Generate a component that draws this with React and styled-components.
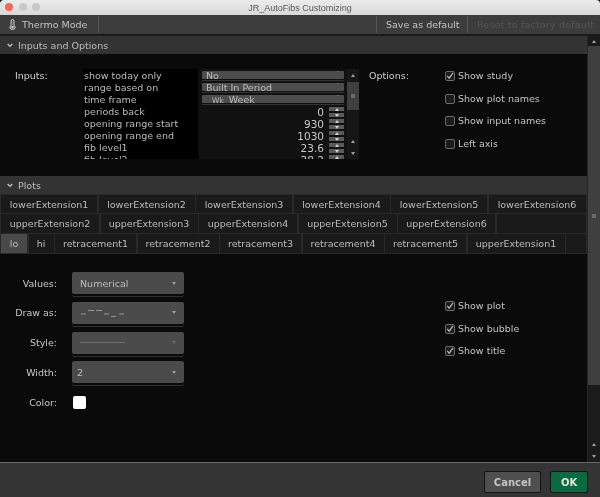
import styled, { createGlobalStyle } from "styled-components";

const GlobalStyle = createGlobalStyle`
  html, body {
    margin: 0;
    padding: 0;
    background: #0a0a0a;
  }
  * {
    box-sizing: border-box;
  }
`;

const Window = styled.div`
  width: 600px;
  height: 497px;
  display: flex;
  flex-direction: column;
  overflow: hidden;
  background: #0a0a0a;
  color: #c8c8c8;
  font-family: "DejaVu Sans", sans-serif;
  font-size: 9.5px;
  filter: blur(0.3px);
`;

// TITLE BAR
const TitleBar = styled.div`
  height: 15px;
  flex: none;
  position: relative;
  display: flex;
  align-items: center;
  justify-content: center;
  background: linear-gradient(#ececec, #d8d8d8);
  border-radius: 4px 4px 0 0;
  color: #5a5a5a;
  font-family: "Liberation Sans", sans-serif;
  font-size: 9px;
`;

const Lights = styled.div`
  position: absolute;
  left: 5px;
  top: 3px;
  display: flex;
  gap: 5.5px;
`;

const Light = styled.span`
  width: 8px;
  height: 8px;
  border-radius: 50%;
  background: ${(props) => props.$color};
`;

// TOOLBAR
const Toolbar = styled.div`
  height: 21px;
  flex: none;
  display: flex;
  align-items: stretch;
  background: #3c3c3c;
  border-bottom: 2px solid #1a1a1a;
`;

const ToolItem = styled.div`
  display: flex;
  align-items: center;
  gap: 6px;
  padding: 0 0 0 9px;
  margin: 1px 0;
  border-right: 1px solid #555;
  color: ${(props) => (props.$disabled ? "#555" : "#c4c4c4")};
  letter-spacing: ${(props) => (props.$disabled ? "0.2px" : "0")};
  width: ${(props) => props.$w}px;
  white-space: nowrap;
  &:last-child {
    border-right: none;
  }
`;

const ToolSpacer = styled.div`
  flex: 1;
  margin: 1px 0;
  border-right: 1px solid #555;
`;

// MAIN
const Main = styled.div`
  flex: 1;
  min-height: 0;
  display: flex;
`;

const Content = styled.div`
  flex: 1;
  min-width: 0;
  display: flex;
  flex-direction: column;
`;

const SectionHeader = styled.div`
  height: 18px;
  flex: none;
  display: flex;
  align-items: center;
  gap: 5px;
  padding-left: 7px;
  background: #333;
  color: #bdbdbd;
`;

const Scrollbar = styled.div`
  width: 13px;
  flex: none;
  display: flex;
  flex-direction: column;
  background: #1b1b1b;
  border-left: 1px solid #262626;
`;

const ScrollCap = styled.div`
  height: ${(props) => props.$h}px;
  flex: none;
  display: flex;
  align-items: center;
  justify-content: center;
`;

const ScrollThumb = styled.div`
  height: ${(props) => props.$h}px;
  flex: none;
  display: flex;
  align-items: center;
  justify-content: center;
  background: #3f3f3f;
`;

const Grip = styled.span`
  width: 4px;
  height: 4px;
  background: #6a6a6a;
`;

const ScrollTrack = styled.div`
  flex: 1;
`;

const Arrow = styled.span`
  width: 0;
  height: 0;
  border-left: 2.5px solid transparent;
  border-right: 2.5px solid transparent;
  ${(props) =>
    props.$down
      ? `border-top: 3px solid ${props.$color || "#a0a0a0"};`
      : `border-bottom: 3px solid ${props.$color || "#a0a0a0"};`}
`;

// INPUTS AND OPTIONS
const InputsSection = styled.div`
  height: 122px;
  flex: none;
  display: flex;
  padding: 15px 0 0 15px;
`;

const InputsLabel = styled.div`
  width: 68px;
  flex: none;
  padding-top: 1px;
  line-height: 12px;
  color: #d0d0d0;
`;

const NamesPanel = styled.div`
  width: 115px;
  height: 90px;
  flex: none;
  overflow: hidden;
  padding: 1px 0 0 1px;
  background: #000;
`;

const NameRow = styled.div`
  height: 12px;
  line-height: 12px;
  white-space: nowrap;
  color: #bcbcbc;
`;

const ValuesPanel = styled.div`
  width: 148px;
  height: 90px;
  flex: none;
  overflow: hidden;
  margin-left: 1px;
  padding-left: 3px;
  background: #111;
`;

const PillList = styled.div`
  margin-bottom: 1px;
`;

const ValueRow = styled.div`
  height: 12px;
  display: flex;
  align-items: center;
  justify-content: flex-end;
  gap: 5px;
  padding-right: 3px;
  color: #c8c8c8;
  font-size: 10.5px;
`;

const Pill = styled.div`
  width: 142px;
  height: 12px;
  padding-top: 2px;
  border-bottom: 1px solid #333;
`;

const PillBody = styled.div`
  height: 7.5px;
  display: flex;
  align-items: flex-start;
  justify-content: space-between;
  overflow: hidden;
  padding: 0 4px;
  border-radius: 1px;
  background: #4d4d4d;
  color: #bdbdbd;
  line-height: 9px;
`;

const PillCaret = styled.span`
  margin-top: 2px;
`;

const WeekTag = styled.span`
  font-size: 7.5px;
  margin: 0 5px 0 6px;
`;

const Spinner = styled.div`
  width: 15px;
  height: 10px;
  flex: none;
  display: flex;
  flex-direction: column;
  justify-content: space-between;
`;

const SpinBar = styled.span`
  height: 4px;
  display: flex;
  align-items: center;
  justify-content: center;
  background: #5a5a5a;
`;

const InnerScroll = styled.div`
  width: 12px;
  height: 90px;
  flex: none;
  display: flex;
  flex-direction: column;
  background: #161616;
`;

const OptionsLabel = styled.div`
  width: 76px;
  flex: none;
  margin-left: 10px;
  padding-top: 1px;
  line-height: 12px;
  color: #d0d0d0;
`;

const CheckList = styled.div`
  display: flex;
  flex-direction: column;
  margin-top: ${(props) => props.$top || 0}px;
`;

const CheckRow = styled.div`
  height: 22.6px;
  display: flex;
  align-items: flex-start;
  gap: 3px;
  line-height: 12px;
  color: #c4c4c4;
`;

const CheckBox = styled.span`
  width: 10px;
  height: 10px;
  flex: none;
  margin-top: 1px;
  display: flex;
  align-items: center;
  justify-content: center;
  border: 1px solid #6a6a6a;
  border-radius: 2px;
  background: #1c1c1c;
`;

// PLOTS
const TabRows = styled.div`
  display: flex;
  flex-direction: column;
  gap: 1px;
  padding: 1px 1px 0;
  height: 60px;
  flex: none;
  background: #292929;
`;

const TabRow = styled.div`
  height: ${(props) => props.$h}px;
  flex: none;
  display: flex;
  gap: 1.5px;
`;

const Tab = styled.div`
  width: ${(props) => props.$w}px;
  flex: ${(props) => (props.$w ? "none" : "1")};
  display: flex;
  align-items: center;
  justify-content: center;
  background: ${(props) => (props.$active ? "#494949" : "#1a1a1a")};
  color: #bcbcbc;
  white-space: nowrap;
`;

const PlotBody = styled.div`
  flex: 1;
  display: flex;
  padding-top: 18px;
`;

const PlotForm = styled.div`
  width: 445px;
  flex: none;
  display: flex;
  flex-direction: column;
  gap: 7.75px;
`;

const FormRow = styled.div`
  height: 22px;
  display: flex;
  align-items: center;
  gap: 15px;
`;

const FormLabel = styled.div`
  width: 57px;
  flex: none;
  text-align: right;
  color: #c8c8c8;
`;

const Select = styled.div`
  width: 112px;
  height: 22px;
  display: flex;
  align-items: center;
  justify-content: space-between;
  padding: 0 8px 0 ${(props) => (props.$tight ? 5 : 8)}px;
  border-radius: 2px;
  background: #4b4b4b;
  box-shadow: 0 2px 0 #0a0a0a, 0 3px 0 #303030;
  color: #bcbcbc;
`;

const Swatch = styled.div`
  width: 13px;
  height: 13px;
  margin-left: 1px;
  border-radius: 2px;
  background: #fff;
`;

// FOOTER
const Footer = styled.div`
  height: 35px;
  flex: none;
  display: flex;
  justify-content: flex-end;
  gap: 9px;
  padding: 8px 12px 0 0;
  background: #343434;
  border-top: 1px solid #6a6a6a;
`;

const Button = styled.button`
  width: ${(props) => props.$w}px;
  height: 22px;
  padding: 0;
  border: 1px solid #141414;
  border-radius: 2px;
  background: ${(props) => (props.$primary ? "#0a6b42" : "#4f4f4f")};
  color: ${(props) => (props.$primary ? "#e4e4e4" : "#c4c4c4")};
  font-family: "DejaVu Sans", sans-serif;
  font-size: 10px;
  font-weight: 700;
`;

const names = [
  "show today only",
  "range based on",
  "time frame",
  "periods back",
  "opening range start",
  "opening range end",
  "fib level1",
  "fib level2",
];

const numbers = ["0", "930", "1030", "23.6", "38.2"];

const tabRows = [
  {
    h: 18,
    tabs: [
      ["lowerExtension1", 96],
      ["lowerExtension2", 96],
      ["lowerExtension3", 96],
      ["lowerExtension4", 96],
      ["lowerExtension5", 96],
      ["lowerExtension6", 97],
    ],
  },
  {
    h: 19,
    tabs: [
      ["upperExtension2", 98],
      ["upperExtension3", 97],
      ["upperExtension4", 98],
      ["upperExtension5", 98],
      ["upperExtension6", 97],
      ["", 0],
    ],
  },
  {
    h: 19,
    tabs: [
      ["lo", 26],
      ["hi", 25],
      ["retracement1", 81],
      ["retracement2", 81],
      ["retracement3", 81],
      ["retracement4", 81],
      ["retracement5", 81],
      ["upperExtension1", 97],
      ["", 0],
    ],
  },
];

const Chevron = () => (
  <svg width="6" height="5" viewBox="0 0 6 5">
    <path d="M0.7 1 L3 3.4 L5.3 1" fill="none" stroke="#c8c8c8" strokeWidth="1.2" />
  </svg>
);

const Thermo = () => (
  <svg width="7" height="11" viewBox="0 0 7 11">
    <path
      d="M2 2a1.5 1.5 0 0 1 3 0V6.2a2.6 2.6 0 1 1-3 0Z"
      fill="#5c5c5c"
      stroke="#d4d4d4"
      strokeWidth="0.9"
    />
    <circle cx="3.5" cy="8.2" r="1.2" fill="#d4d4d4" />
  </svg>
);

const Tick = () => (
  <svg width="8" height="8" viewBox="0 0 8 8">
    <path d="M1.2 3.8 L3.2 6.2 L7 0.8" fill="none" stroke="#b8b8b8" strokeWidth="1.2" />
  </svg>
);

const DashLine = () => (
  <svg width="46" height="10" viewBox="0 0 46 10">
    <path
      d="M1 6h5M8 2.5h6M16 2.5h6M24 6h5M31 8.5h5M37 8.5h0M39 6h5"
      fill="none"
      stroke="#a8a8a8"
      strokeWidth="0.8"
    />
  </svg>
);

const ThinLine = () => (
  <svg width="46" height="3" viewBox="0 0 46 3">
    <path d="M0 1.5h45" stroke="#6e6e6e" strokeWidth="1" />
  </svg>
);

const Check = ({ label, checked }) => (
  <CheckRow>
    <CheckBox>{checked && <Tick />}</CheckBox>
    {label}
  </CheckRow>
);

export default function App() {
  return (
    <Window>
      <GlobalStyle />
      <TitleBar>
        <Lights>
          <Light $color="#ee6a5f" />
          <Light $color="#c8c8c8" />
          <Light $color="#c8c8c8" />
        </Lights>
        JR_AutoFibs Customizing
      </TitleBar>

      <Toolbar>
        <ToolItem $w={99}>
          <Thermo />
          Thermo Mode
        </ToolItem>
        <ToolSpacer />
        <ToolItem $w={91}>Save as default</ToolItem>
        <ToolItem $w={132} $disabled>
          Reset to factory default
        </ToolItem>
      </Toolbar>

      <Main>
        <Content>
          <SectionHeader>
            <Chevron />
            Inputs and Options
          </SectionHeader>
          <InputsSection>
            <InputsLabel>Inputs:</InputsLabel>
            <NamesPanel>
              {names.map((name) => (
                <NameRow key={name}>{name}</NameRow>
              ))}
            </NamesPanel>
            <ValuesPanel>
              <PillList>
                <Pill>
                  <PillBody>
                    No
                    <PillCaret>
                      <Arrow $down />
                    </PillCaret>
                  </PillBody>
                </Pill>
                <Pill>
                  <PillBody>
                    Built In Period
                    <PillCaret>
                      <Arrow $down />
                    </PillCaret>
                  </PillBody>
                </Pill>
                <Pill>
                  <PillBody>
                    <span>
                      <WeekTag>Wk</WeekTag>Week
                    </span>
                    <PillCaret>
                      <Arrow $down />
                    </PillCaret>
                  </PillBody>
                </Pill>
              </PillList>
              {numbers.map((value) => (
                <ValueRow key={value}>
                  {value}
                  <Spinner>
                    <SpinBar>
                      <Arrow $color="#cfcfcf" />
                    </SpinBar>
                    <SpinBar>
                      <Arrow $down $color="#cfcfcf" />
                    </SpinBar>
                  </Spinner>
                </ValueRow>
              ))}
            </ValuesPanel>
            <InnerScroll>
              <ScrollCap $h={13}>
                <Arrow />
              </ScrollCap>
              <ScrollThumb $h={28}>
                <Grip />
              </ScrollThumb>
              <ScrollTrack />
              <ScrollCap $h={12}>
                <Arrow />
              </ScrollCap>
              <ScrollCap $h={12}>
                <Arrow $down />
              </ScrollCap>
            </InnerScroll>
            <OptionsLabel>Options:</OptionsLabel>
            <CheckList $top={1}>
              <Check label="Show study" checked />
              <Check label="Show plot names" />
              <Check label="Show input names" />
              <Check label="Left axis" />
            </CheckList>
          </InputsSection>

          <SectionHeader>
            <Chevron />
            Plots
          </SectionHeader>
          <TabRows>
            {tabRows.map((row, i) => (
              <TabRow key={i} $h={row.h}>
                {row.tabs.map(([label, width], j) => (
                  <Tab key={j} $w={width} $active={label === "lo"}>
                    {label}
                  </Tab>
                ))}
              </TabRow>
            ))}
          </TabRows>
          <PlotBody>
            <PlotForm>
              <FormRow>
                <FormLabel>Values:</FormLabel>
                <Select>
                  Numerical
                  <Arrow $down />
                </Select>
              </FormRow>
              <FormRow>
                <FormLabel>Draw as:</FormLabel>
                <Select>
                  <DashLine />
                  <Arrow $down />
                </Select>
              </FormRow>
              <FormRow>
                <FormLabel>Style:</FormLabel>
                <Select>
                  <ThinLine />
                  <Arrow $down $color="#6e6e6e" />
                </Select>
              </FormRow>
              <FormRow>
                <FormLabel>Width:</FormLabel>
                <Select $tight>
                  2
                  <Arrow $down />
                </Select>
              </FormRow>
              <FormRow>
                <FormLabel>Color:</FormLabel>
                <Swatch />
              </FormRow>
            </PlotForm>
            <CheckList $top={28}>
              <Check label="Show plot" checked />
              <Check label="Show bubble" checked />
              <Check label="Show title" checked />
            </CheckList>
          </PlotBody>
        </Content>
        <Scrollbar>
          <ScrollCap $h={10}>
            <Arrow />
          </ScrollCap>
          <ScrollThumb $h={339}>
            <Grip />
          </ScrollThumb>
          <ScrollTrack />
          <ScrollCap $h={11}>
            <Arrow />
          </ScrollCap>
          <ScrollCap $h={12}>
            <Arrow $down />
          </ScrollCap>
        </Scrollbar>
      </Main>

      <Footer>
        <Button $w={57}>Cancel</Button>
        <Button $w={38} $primary>
          OK
        </Button>
      </Footer>
    </Window>
  );
}
